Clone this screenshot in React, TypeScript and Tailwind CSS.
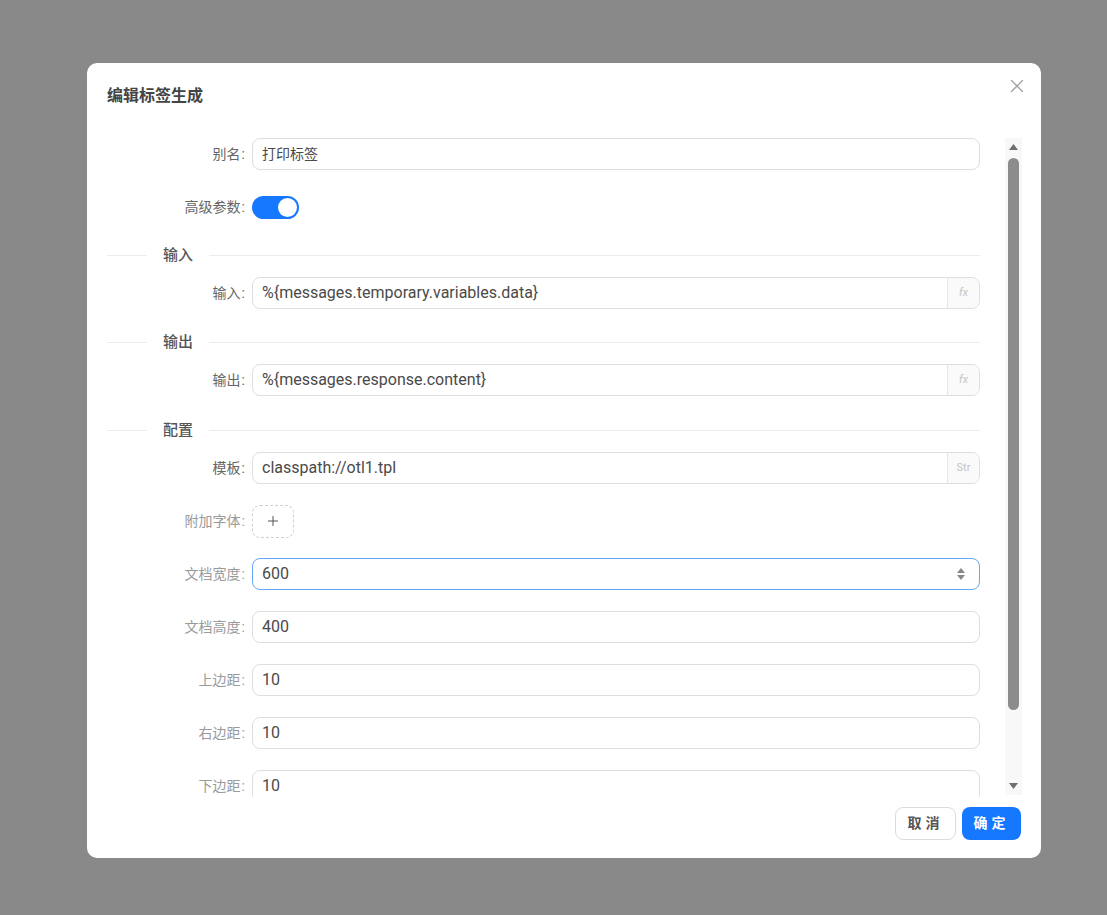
import React from 'react';
import { X, Plus } from 'lucide-react';

const font = "font-['Roboto','Noto_Sans_CJK_SC',sans-serif]";

function Label({ text, light }: { text: string; light?: boolean }) {
  return (
    <div
      className={`w-[145px] shrink-0 pr-[7px] text-right text-[14px] ${light ? 'text-[#9a9a9a]' : 'text-[#666]'}`}
    >
      {text}
      <span className="ml-[1px]">:</span>
    </div>
  );
}

function Row({ children, className = 'mb-[21px]' }: { children: React.ReactNode; className?: string }) {
  return <div className={`flex h-[32px] shrink-0 items-center ${className}`}>{children}</div>;
}

function TextInput({
  value,
  addon,
  focused,
  spinner,
  cjk,
}: {
  value: string;
  addon?: string;
  focused?: boolean;
  spinner?: boolean;
  cjk?: boolean;
}) {
  return (
    <div
      className={`flex h-[32px] flex-1 items-stretch overflow-hidden rounded-[8px] border ${
        focused ? 'border-[#69a7ff]' : 'border-[#dedede]'
      } bg-white`}
    >
      <div className={`flex flex-1 items-center pl-[9px] text-[#4a4a4a] ${cjk ? 'text-[14px]' : 'text-[16px]'}`}>
        {value}
      </div>
      {spinner && (
        <div className="flex w-[36px] flex-col items-center justify-center gap-[2px] text-[#888]">
          <svg width="8" height="5" viewBox="0 0 8 5"><path d="M4 0 L8 5 L0 5 Z" fill="currentColor" /></svg>
          <svg width="8" height="5" viewBox="0 0 8 5"><path d="M0 0 L8 0 L4 5 Z" fill="currentColor" /></svg>
        </div>
      )}
      {addon && (
        <div className="flex w-[32px] items-center justify-center border-l border-[#e6e6e6] bg-[#fafafa] text-[11px] text-[#c4c4c4]">
          <span className={addon === 'fx' ? 'italic' : ''}>{addon}</span>
        </div>
      )}
    </div>
  );
}

function Divider({ text }: { text: string }) {
  return (
    <div className="mb-[11px] flex h-[22px] shrink-0 items-center">
      <div className="h-px w-[40px] bg-[#ececec]" />
      <div className="px-[16px] text-[15px] font-medium text-[#555]">{text}</div>
      <div className="h-px flex-1 bg-[#ececec]" />
    </div>
  );
}

export default function App() {
  return (
    <div className={`min-h-screen bg-[#898989] pl-[87px] pt-[63px] ${font}`}>
      <div className="flex h-[795px] w-[954px] flex-col rounded-[10px] bg-white">
        {/* header */}
        <div className="flex h-[75px] shrink-0 items-start justify-between pl-[20px] pr-[13px]">
          <h1 className="mt-[21px] text-[16px] font-bold text-[#444]">编辑标签生成</h1>
          <button className="mt-[12px] text-[#a0a0a0]">
            <X size={22} strokeWidth={1.4} />
          </button>
        </div>

        {/* body */}
        <div className="flex h-[659px] shrink-0 pl-[20px] pr-[19px]">
          <div className="flex w-[873px] flex-col overflow-hidden">
            <Row>
              <Label text="别名" />
              <TextInput value="打印标签" cjk />
            </Row>
            <Row>
              <Label text="高级参数" />
              <div className="flex h-[23px] w-[47px] items-center justify-end rounded-full bg-[#1677ff] pr-[2px]">
                <div className="h-[19px] w-[19px] rounded-full bg-white" />
              </div>
            </Row>
            <Divider text="输入" />
            <Row className="mb-[22px]">
              <Label text="输入" />
              <TextInput value="%{messages.temporary.variables.data}" addon="fx" />
            </Row>
            <Divider text="输出" />
            <Row className="mb-[23px]">
              <Label text="输出" />
              <TextInput value="%{messages.response.content}" addon="fx" />
            </Row>
            <Divider text="配置" />
            <Row>
              <Label text="模板" />
              <TextInput value="classpath://otl1.tpl" addon="Str" />
            </Row>
            <Row>
              <Label text="附加字体" light />
              <div className="flex h-[33px] w-[42px] items-center justify-center rounded-[8px] border border-dashed border-[#cfcfcf] text-[#555]">
                <Plus size={16} strokeWidth={1.5} />
              </div>
            </Row>
            <Row>
              <Label text="文档宽度" light />
              <TextInput value="600" focused spinner />
            </Row>
            <Row>
              <Label text="文档高度" light />
              <TextInput value="400" />
            </Row>
            <Row>
              <Label text="上边距" light />
              <TextInput value="10" />
            </Row>
            <Row>
              <Label text="右边距" light />
              <TextInput value="10" />
            </Row>
            <Row>
              <Label text="下边距" light />
              <TextInput value="10" />
            </Row>
          </div>

          {/* scrollbar */}
          <div className="ml-[25px] flex h-[657px] w-[17px] flex-col items-center bg-[#f8f8f8] pt-[6px] pb-[6px]">
            <svg width="9" height="6" viewBox="0 0 9 6" className="text-[#6f6f6f]">
              <path d="M4.5 0 L9 6 L0 6 Z" fill="currentColor" />
            </svg>
            <div className="mt-[8px] h-[552px] w-[11px] rounded-full bg-[#8c8c8c]" />
            <div className="flex-1" />
            <svg width="9" height="6" viewBox="0 0 9 6" className="text-[#6f6f6f]">
              <path d="M0 0 L9 0 L4.5 6 Z" fill="currentColor" />
            </svg>
          </div>
        </div>

        {/* footer */}
        <div className="flex flex-1 items-start justify-end gap-[6px] pr-[20px] pt-[10px]">
          <button className="h-[33px] w-[61px] rounded-[8px] border border-[#dcdcdc] bg-white text-[14px] font-bold tracking-[4px] text-[#555]">
            取消
          </button>
          <button className="h-[33px] w-[59px] rounded-[8px] bg-[#1677ff] text-[14px] font-bold tracking-[4px] text-white">
            确定
          </button>
        </div>
      </div>
    </div>
  );
}
